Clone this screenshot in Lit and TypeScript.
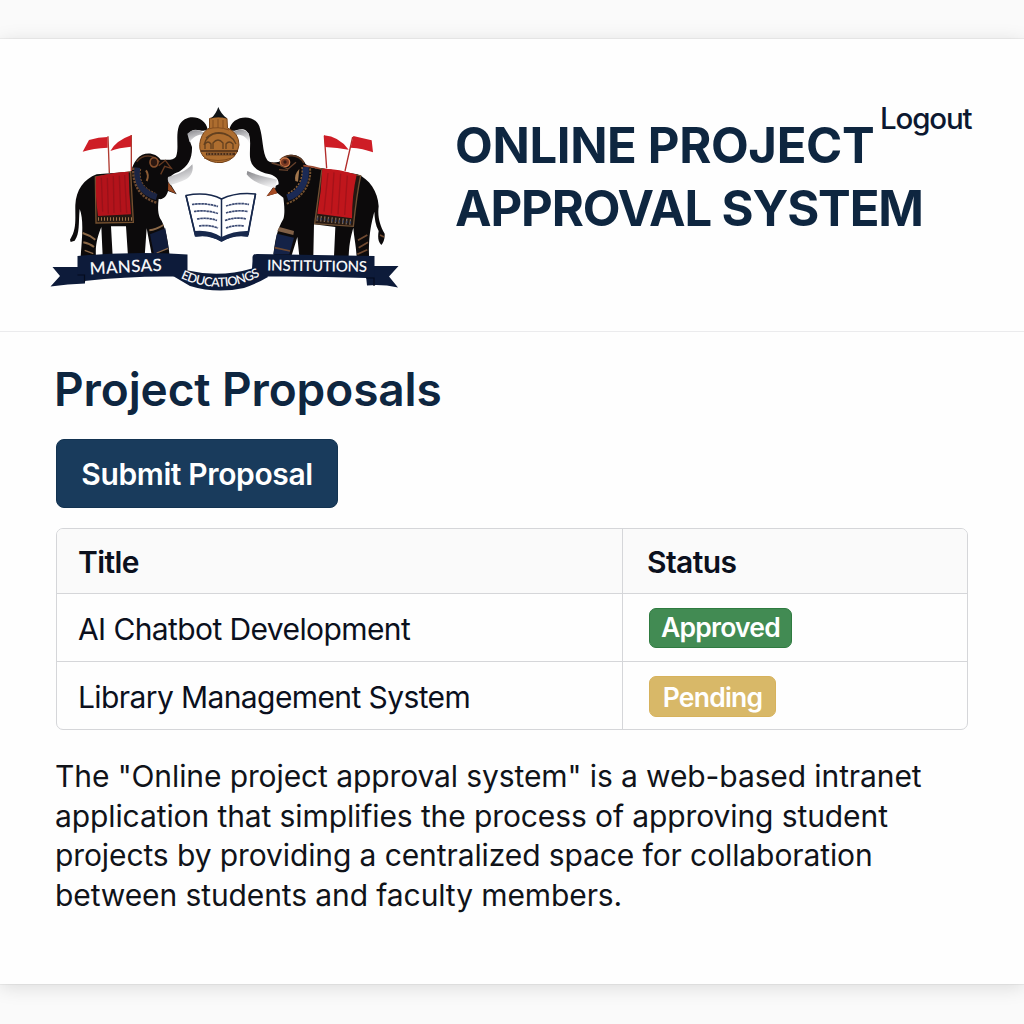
import { LitElement, html, css, svg } from 'lit';
import { customElement } from 'lit/decorators.js';

interface Proposal {
  title: string;
  status: 'Approved' | 'Pending';
}

const proposals: Proposal[] = [
  { title: 'AI Chatbot Development', status: 'Approved' },
  { title: 'Library Management System', status: 'Pending' },
];

/* Elephant on the left, drawn at three units per pixel. */
const leftElephant = svg`
  <g transform="translate(40 95) scale(.33333)">
    <path d="M500 98C484 110 462 104 450 118C446 128 446 140 448 150L440 130L444 108L470 96Z" fill="#c3c3c5"/>
    <path d="M503 103C496 62 436 52 417 92C406 122 418 160 408 185C400 197 384 194 362 194C346 171 310 168 291 192C280 205 277 218 272 230L170 238C132 252 108 285 106 330C105 372 111 402 90 434L92 441L104 437C120 415 115 385 119 342C130 370 128 410 122 484L168 484C165 450 174 420 184 396L188 484H218L213 394H258L264 484H314L320 400L336 484H389C385 440 376 392 360 370C352 350 354 330 356 312C372 315 381 300 384 288L410 298L388 262C384 246 398 236 417 230C445 214 457 190 456 156C445 128 440 106 466 104C482 104 490 112 503 103Z" fill="#0c0a0b"/>
    <path d="M384 246C408 240 438 230 457 208C461 225 456 243 438 253C420 262 404 266 392 270C384 264 382 254 384 246Z" fill="url(#tusk)"/>
    <path d="M385 262L408 296L384 286Z" fill="#9a4b22"/>
    <path d="M442 116C458 100 482 104 500 118C482 118 462 120 449 142Z" fill="url(#tusk)"/>
    <path d="M290 200C308 178 340 176 358 202" fill="none" stroke="#5b3722" stroke-width="5"/>
    <ellipse cx="342" cy="202" rx="12" ry="14" fill="#2b1711" stroke="#874f2c" stroke-width="5"/>
    <path d="M356 212L376 196L394 220L374 214L362 238" fill="none" stroke="#673a21" stroke-width="4"/>
    <path d="M292 218C286 258 302 292 350 306" fill="none" stroke="#1c2544" stroke-width="18"/>
    <path d="M280 218C276 266 298 308 350 323" fill="none" stroke="#6e4b31" stroke-width="7" stroke-dasharray="7 3"/>
    <path d="M302 222C296 256 310 280 346 294" fill="none" stroke="#77502e" stroke-width="3" stroke-dasharray="6 4"/>
    <path d="M318 226Q328 240 320 258" fill="none" stroke="#8b5c35" stroke-width="6"/>
    <path d="M166 246L272 230L280 382L168 384Z" fill="#241812" stroke="#74502f" stroke-width="4"/>
    <path d="M168 245Q220 232 266 230Q267 292 273 358L174 363Q165 300 168 245Z" fill="#b3131b"/>
    <path d="M184 248L188 350M202 248L205 356M220 244L222 354M238 242L242 352M254 240L260 354" stroke="#8d1018" stroke-width="4" opacity=".65"/>
    <path d="M174 372H276" stroke="#9b7347" stroke-width="10" stroke-dasharray="3 6"/>
    <path d="M328 406Q348 404 370 390M128 414Q148 420 166 434M130 442Q150 446 162 456M336 440L380 430" fill="none" stroke="#8b6847" stroke-width="6"/>
    <path d="M330 418L376 400L386 462L342 478Z" fill="#111c3a"/>
    <path d="M350 474L384 460M134 466L160 476" stroke="#8b6847" stroke-width="4"/>
    <path d="M204 124L208 234M274 120V228" stroke="#b03a30" stroke-width="4"/>
    <path d="M128 170L147 135Q176 126 203 126V158Q160 160 128 170Z" fill="#ce1d26"/>
    <path d="M211 168Q228 137 273 121V155Q238 158 211 168Z" fill="#ce1d26"/>
  </g>`;

/* Elephant on the right, same scale. */
const rightElephant = svg`
  <g transform="translate(220 95) scale(.33333)">
    <path d="M28 106C32 62 102 52 118 94C130 128 126 172 142 196C152 206 166 202 178 200C192 174 238 168 256 206C270 220 290 220 306 220L412 238C448 252 474 290 476 334C472 366 480 392 494 416C495 432 490 444 484 450C472 440 474 420 476 408C466 390 464 370 463 350C456 380 446 410 447 486H410C408 450 402 426 400 398C394 420 388 440 386 484H342L346 396L282 388L280 484H238L232 426L214 484H160C164 440 172 400 190 372C196 354 192 322 190 308L172 294L140 304L160 276L176 268C176 252 168 244 150 238C116 232 92 216 90 186C88 152 98 118 74 104C56 98 46 112 28 106Z" fill="#0c0a0b"/>
    <path d="M82 228C112 242 142 246 171 254L166 280C132 272 98 262 80 238Z" fill="url(#tusk)"/>
    <path d="M139 304L162 276L172 295Z" fill="#a64b23"/>
    <path d="M35 114C54 100 76 102 87 116L89 146C78 120 58 116 35 122Z" fill="url(#tusk)"/>
    <path d="M180 196C198 176 236 176 252 204" fill="none" stroke="#5b3722" stroke-width="5"/>
    <ellipse cx="195" cy="202" rx="14" ry="13" fill="#7d3a23" stroke="#c77444" stroke-width="4"/>
    <circle cx="195" cy="201" r="5" fill="#351a15"/>
    <path d="M155 204L177 210L204 222L228 202M177 224L204 226" fill="none" stroke="#65402b" stroke-width="4"/>
    <path d="M256 216C262 260 240 296 202 308" fill="none" stroke="#1b2a55" stroke-width="20"/>
    <path d="M270 220C276 270 242 312 200 326" fill="none" stroke="#73502f" stroke-width="6" stroke-dasharray="7 3"/>
    <path d="M246 216C250 256 232 282 202 296" fill="none" stroke="#8a6138" stroke-width="4" stroke-dasharray="6 4"/>
    <path d="M226 258Q222 238 238 222L234 260Z" fill="#a2764c"/>
    <path d="M250 212Q278 214 304 222" fill="none" stroke="#9b4c33" stroke-width="5"/>
    <path d="M306 222L422 242Q410 300 400 394L284 386Z" fill="#251812" stroke="#705034" stroke-width="4"/>
    <path d="M307 221Q354 220 410 239Q396 300 396 370L292 356Q304 290 307 221Z" fill="#c0161c"/>
    <path d="M324 234L312 350M342 232L334 356M362 236L354 358M382 242L374 360" stroke="#8e1018" stroke-width="4" opacity=".55"/>
    <path d="M290 370L398 382" stroke="#7d6650" stroke-width="17" stroke-dasharray="4 7"/>
    <path d="M292 371L398 383" stroke="#213767" stroke-width="7" stroke-dasharray="3 8"/>
    <path d="M178 396L222 408L220 420L172 408Z" fill="#806047"/>
    <path d="M171 416L222 428L208 478H160Z" fill="#142247"/>
    <path d="M164 458L210 468M414 436L442 420M416 458L444 442M412 478L442 464M480 420L492 426" fill="none" stroke="#704a31" stroke-width="5"/>
    <path d="M313 122L320 220M398 126L375 228" stroke="#b22d2b" stroke-width="4"/>
    <path d="M312 121Q356 124 386 164Q352 158 315 156Z" fill="#ce1d26"/>
    <path d="M400 123Q430 130 455 136L459 172Q430 160 392 158Z" fill="#ce1d26"/>
  </g>`;

/* Finial, open book and ribbon, in page pixels. */
const centrepiece = svg`
  <path d="M209.500 118.500Q218.500 115 227 118.500L227.500 128Q239 133 239 145Q237 160 222 162.500Q210 163.500 203 156Q198 149 200.500 140Q203 131 209.500 128Z" fill="#ad6d2f" stroke="#754319" stroke-width="1"/>
  <path d="M211 118.500Q216 114 218.300 107Q221 114 227 118.500Q218 116 211 118.500Z" fill="#101417"/>
  <path d="M213 120V128M218 119V128M223 120V128M208 129Q218 126 229 130" fill="none" stroke="#7f4b1e" stroke-width=".9"/>
  <path d="M204 145Q207 134 218 133Q231 133 236 144M205 149V144Q208 140 211 144V149M213 149V143Q218 137 223 143V149M226 149V144Q229 140 233 144V149M206 138Q218 128 231 137" fill="none" stroke="#63401f" stroke-width="1.300"/>
  <path d="M201 151H238" stroke="#4a2d19" stroke-width="1.400"/>
  <path d="M206 154H235" stroke="#4a2d19" stroke-width="2.600"/>
  <path d="M207 154H234" stroke="#c18a52" stroke-width=".9" stroke-dasharray="1.500 1.500"/>
  <path d="M204 158Q218 163 232 158" fill="none" stroke="#7f4b1e" stroke-width="1"/>

  <path d="M186 195.500Q207 191.500 221.500 199Q236 192 255.500 194L247.500 236Q234 234 221.500 241Q209 233.500 195.500 236Z" fill="#fff" stroke="#17284c" stroke-width="1.500" stroke-linejoin="round"/>
  <path d="M194.500 231Q210 229.500 221.500 237Q234 230.500 248.500 231L247.500 236.500Q234 234 221.500 241.500Q209 234 196 236.500Z" fill="#17284c"/>
  <path d="M221.500 199V239M186 195.500L195.500 235M255.500 194L248 235" stroke="#17284c" stroke-width="1.500"/>
  <g fill="none" stroke="#3b4a73" stroke-width="1.700" stroke-dasharray="2.600 .5">
    <path d="M192 204.500Q205 202.500 218 206.500M194 211.500Q206 209.500 218 213.500M197 219Q208 217 217 220.500M199 226Q209 224.500 218 228"/>
    <path d="M226 206Q238 202 249 204.500M226 213Q237 209.500 248 211.500M225 220.500Q236 216.500 246 219M226 228Q235 224.500 244 226"/>
  </g>

  <g fill="#0d1b3a">
    <path d="M52.500 267H85V283.500Q68 284 50.500 286.500L60 276Z"/>
    <path d="M365 266H398.500L389 276.500L398 287.500Q382 284 367 285.500Z"/>
    <path d="M173 260Q176 268 188 270.500Q220 278 252 268.500L254 254L268 277Q258 283 244 288Q216 294 190 286L173 276Z"/>
    <path d="M77.500 256Q132 251 187.500 254.500V270L173.500 276.500Q128 276 84.500 281V275H77.500Z"/>
    <path d="M252.500 257Q253 254 257 254L374.500 256V277.500L366 278Q315 276 267 276.500L252.500 269Z"/>
  </g>
  <path d="M77.500 275H84.500V282M366 278H374V286" fill="none" stroke="#050b1c" stroke-width="1.200"/>
  <path id="bannerArc" d="M179.500 277.500Q220 297 262 275" fill="none"/>
  <g fill="#f5f5f7" font-family="Lato, 'Open Sans', sans-serif" font-weight="600">
    <text x="90" y="274.500" font-size="17" textLength="72" transform="rotate(-3 90 274.500)">MANSAS</text>
    <text font-size="12.500"><textPath href="#bannerArc" startOffset="1" textLength="83">EDUCATIONGS</textPath></text>
    <text x="267" y="270.500" font-size="15" textLength="100" transform="rotate(.8 267 270.500)">INSTITUTIONS</text>
  </g>`;

@customElement('app-root')
export class AppRoot extends LitElement {
  static styles = css`
    :host {
      display: block;
      box-sizing: border-box;
      height: 1024px;
      padding-top: 39px;
      overflow: hidden;
      background: #fafafa;
      font-family: Inter, 'Liberation Sans', sans-serif;
      color: #0b101d;
    }
    .card {
      box-sizing: border-box;
      height: 945px;
      background: #fefefe;
      box-shadow: 0 0 1px rgba(0, 0, 0, 0.25), 0 3px 18px rgba(0, 0, 0, 0.13);
    }
    header {
      box-sizing: border-box;
      display: flex;
      align-items: flex-start;
      height: 293px;
      padding: 61px 50px 0 48px;
      border-bottom: 1px solid #ebebed;
    }
    .crest {
      flex: none;
      width: 352px;
      height: 196px;
    }
    h1,
    h2,
    p {
      margin: 0;
    }
    h1 {
      flex: none;
      width: 425px;
      margin: 15px 0 0 55px;
      font-size: 49px;
      font-weight: 700;
      line-height: 62.5px;
      color: #0e2640;
      white-space: nowrap;
    }
    .line {
      display: block;
      letter-spacing: -0.36px;
    }
    .line.tight {
      letter-spacing: -1.13px;
    }
    .logout {
      flex: none;
      font-size: 29.5px;
      font-weight: 500;
      line-height: 36px;
      letter-spacing: -1.15px;
      color: #0c1830;
      text-decoration: none;
    }
    main {
      display: flex;
      flex-direction: column;
      align-items: flex-start;
      padding: 29px 56px 0;
    }
    h2 {
      margin-left: -2px;
      font-size: 46px;
      font-weight: 600;
      line-height: 56px;
      letter-spacing: -0.1px;
      color: #0e2640;
    }
    .submit {
      width: 282px;
      height: 69px;
      margin-top: 22px;
      padding: 0;
      border: 1px solid #133351;
      border-radius: 8px;
      background: #193b5c;
      color: #fff;
      font: 600 30px/66px Inter, 'Liberation Sans', sans-serif;
      letter-spacing: -0.37px;
    }
    .table {
      box-sizing: border-box;
      width: 912px;
      margin-top: 20px;
      border: 1px solid #d5d6d9;
      border-radius: 7px;
      overflow: hidden;
      font-size: 30px;
      letter-spacing: -0.6px;
    }
    .row {
      display: grid;
      grid-template-columns: 565px 1fr;
      height: 67px;
      border-top: 1px solid #d5d6d9;
    }
    .row.head {
      height: 64px;
      border-top: 0;
      background: #fafafa;
      font-weight: 600;
    }
    .cell {
      display: flex;
      align-items: center;
      padding: 2px 0 0 21px;
    }
    .cell + .cell {
      padding: 0 0 0 26px;
      border-left: 1px solid #d5d6d9;
    }
    .head .cell,
    .head .cell + .cell {
      padding-top: 1px;
    }
    .head .cell + .cell {
      padding-left: 24px;
    }
    .badge {
      box-sizing: border-box;
      height: 40px;
      border-radius: 7px;
      font-size: 26.5px;
      font-weight: 600;
      line-height: 37px;
      letter-spacing: -0.8px;
      text-align: center;
      color: #fff;
    }
    .approved {
      width: 143px;
      border: 1px solid #2f7b40;
      background: #428b53;
    }
    .pending {
      width: 127px;
      height: 41px;
      line-height: 40px;
      border: 1px solid #d7b25c;
      background: #d8b868;
      margin-top: 2px;
    }
    p {
      margin: 27px 0 0 -1px;
      font-size: 30px;
      line-height: 39.7px;
      letter-spacing: -0.1px;
      white-space: nowrap;
      color: #101319;
    }
  `;

  render() {
    return html`
      <div class="card">
        <header>
          <svg class="crest" viewBox="48 100 352 196" aria-label="Mansas Educationgs Institutions">
            <defs>
              <linearGradient id="tusk" x1="0" y1="0" x2=".4" y2="1">
                <stop offset="0" stop-color="#858589" />
                <stop offset=".5" stop-color="#b9b9bc" />
                <stop offset="1" stop-color="#eeeeef" />
              </linearGradient>
            </defs>
            ${leftElephant}${rightElephant}${centrepiece}
          </svg>
          <h1>
            <span class="line">ONLINE PROJECT</span>
            <span class="line tight">APPROVAL SYSTEM</span>
          </h1>
          <a class="logout">Logout</a>
        </header>
        <main>
          <h2>Project Proposals</h2>
          <button class="submit">Submit Proposal</button>
          <div class="table">
            <div class="row head">
              <div class="cell">Title</div>
              <div class="cell">Status</div>
            </div>
            ${proposals.map(
              (p) => html`<div class="row">
                <div class="cell">${p.title}</div>
                <div class="cell">
                  <span class="badge ${p.status.toLowerCase()}">${p.status}</span>
                </div>
              </div>`
            )}
          </div>
          <p>
            The "Online project approval system" is a web-based intranet<br />
            application that simplifies the process of approving student<br />
            projects by providing a centralized space for collaboration<br />
            between students and faculty members.
          </p>
        </main>
      </div>
    `;
  }
}
